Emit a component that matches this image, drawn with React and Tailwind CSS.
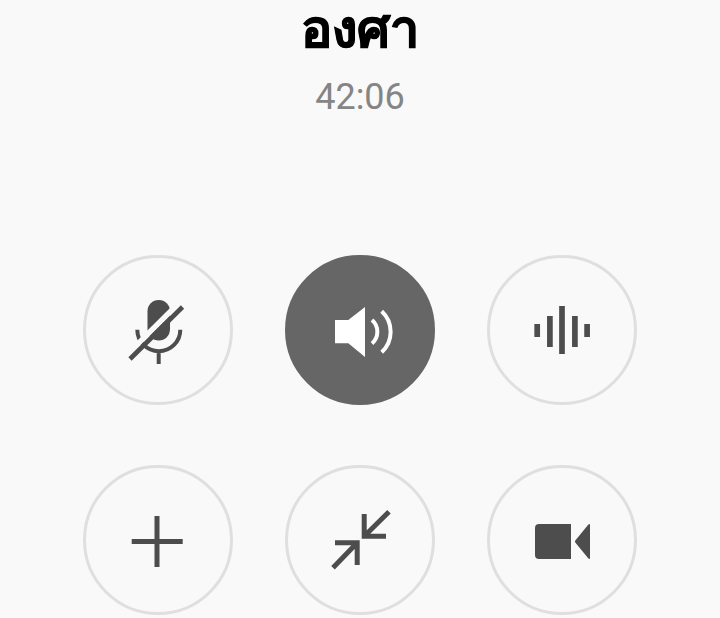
import { useState } from 'react';

function MicOffIcon() {
    return (
        <svg className="size-18" viewBox="0 0 72 72" fill="none" stroke="#4d4d4d" strokeWidth="4" aria-hidden="true">
            <rect x="25.5" y="6" width="22.5" height="40.5" rx="11.2" fill="#4d4d4d" stroke="none" />
            <path d="M15.3 35.7a21.5 21.5 0 0 0 43 0M36.7 57v13" />
            <path d="M6 59.6L60 6" stroke="#f9f9f9" strokeWidth="5.4" />
            <path d="M8 65L60.5 13" strokeWidth="4.6" />
        </svg>
    );
}

function SpeakerIcon() {
    return (
        <svg className="size-18" viewBox="0 0 72 72" fill="none" stroke="#fff" strokeWidth="4" aria-hidden="true">
            <path d="M11 26h13.3L41 13v50L24.3 49.3H11z" fill="#fff" stroke="none" />
            <path d="M48 26a15.5 15.5 0 0 1 0 23.4M57.7 17.2a28 28 0 0 1 0 41" />
        </svg>
    );
}

function WaveIcon() {
    return (
        <svg className="size-18" viewBox="0 0 72 72" fill="none" stroke="#4d4d4d" strokeWidth="5.7" aria-hidden="true">
            <path d="M11.2 30v13M23.9 22v31M36 12v48M48.9 22v31M61.1 30v13" />
        </svg>
    );
}

function PlusIcon() {
    return (
        <svg className="size-18" viewBox="0 0 72 72" fill="none" stroke="#4d4d4d" strokeWidth="5" aria-hidden="true">
            <path d="M35 12v51M9.7 37.5h51" />
        </svg>
    );
}

function MinimizeIcon() {
    return (
        <svg className="size-18" viewBox="0 0 72 72" fill="none" stroke="#4d4d4d" strokeWidth="5" aria-hidden="true">
            <path d="M40.2 10v22.2H62M40.2 32.2L65 7.7" />
            <path d="M11 38.8h22.2V61M33.2 38.8L9 63.7" />
        </svg>
    );
}

function VideoIcon() {
    return (
        <svg className="size-18" viewBox="0 0 72 72" fill="#4d4d4d" aria-hidden="true">
            <path d="M13 20h32v35H13a4 4 0 0 1-4-4V24a4 4 0 0 1 4-4z" />
            <path d="M49.3 36.4L62.4 20.4Q64 19.4 64 21v33q0 1.6-1.6.6L49.3 38.6q-.8-1.1 0-2.2z" />
        </svg>
    );
}

const actions = [
    { id: 'mute', label: 'Mute', Icon: MicOffIcon },
    { id: 'speaker', label: 'Speaker', Icon: SpeakerIcon },
    { id: 'voice', label: 'Voice effects', Icon: WaveIcon },
    { id: 'add', label: 'Add call', Icon: PlusIcon },
    { id: 'minimize', label: 'Minimize', Icon: MinimizeIcon },
    { id: 'video', label: 'Video call', Icon: VideoIcon },
];

export default function App() {
    const [speakerOn, setSpeakerOn] = useState(true);

    return (
        <main className="min-h-screen bg-[#f9f9f9] font-['Roboto','Noto_Sans',sans-serif]">
            <header className="flex flex-col items-center pt-0.5 text-center">
                <h1 className="text-[52px] leading-14 font-bold text-black [-webkit-text-stroke:1px_black]">องศา</h1>
                <p className="mt-[15px] text-4xl leading-12 text-[#858585]">42:06</p>
            </header>

            <div className="mx-auto mt-[134px] grid w-fit grid-cols-3 gap-x-13 gap-y-15">
                {actions.map(({ id, label, Icon }) => (
                    <button
                        key={id}
                        type="button"
                        aria-label={label}
                        aria-pressed={id === 'speaker' ? speakerOn : undefined}
                        onClick={id === 'speaker' ? () => setSpeakerOn(!speakerOn) : undefined}
                        className={`flex size-[150px] items-center justify-center rounded-full border-3 ${
                            id === 'speaker' && speakerOn ? 'border-[#666666] bg-[#666666]' : 'border-[#dfdfdf]'
                        }`}
                    >
                        <Icon />
                    </button>
                ))}
            </div>
        </main>
    );
}
